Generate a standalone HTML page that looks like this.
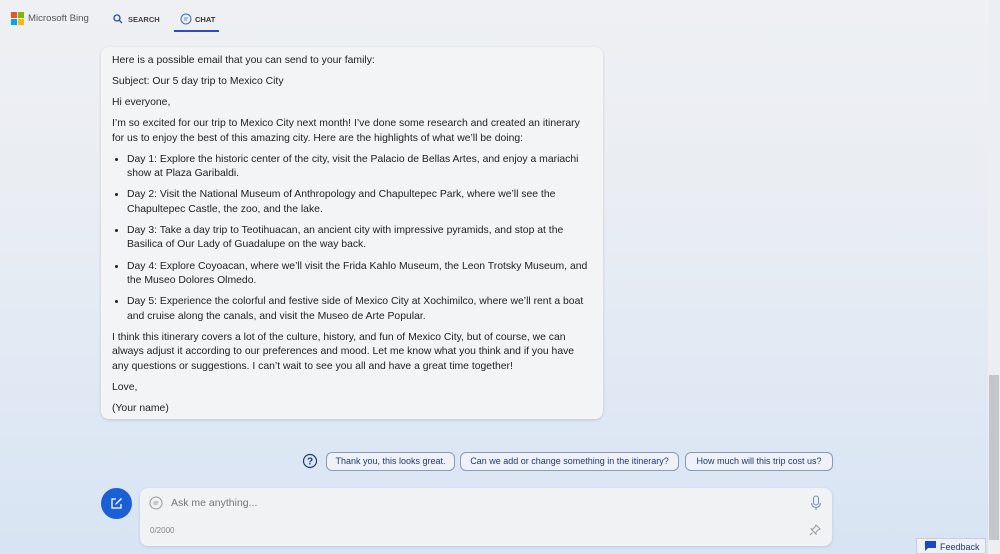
<!DOCTYPE html><html><head><style>
body{margin:0;width:1000px;height:554px;overflow:hidden;font-family:"Liberation Sans",sans-serif;background:linear-gradient(180deg,#eef0f3 0%,#e9edf3 40%,#dde7f4 80%,#d8e4f3 100%);position:relative}
.top{position:absolute;top:0;left:0;height:40px;width:988px}
.logo{position:absolute;left:11px;top:12px;width:13px;height:13px}
.logo i{position:absolute;width:6px;height:6px}
.msg{position:absolute;left:101px;top:47px;width:502px;height:372px;background:#f3f4f6;border-radius:8px;box-shadow:0 1px 3px rgba(0,0,0,.15);font-size:10.4px;color:#222;line-height:14.4px;box-sizing:border-box;padding:6.5px 11px}
.msg p{margin:0 0 6.8px}
.msg ul{margin:0 0 6.8px;padding-left:15px}
.msg li{margin-bottom:6.8px}
.chip{position:absolute;top:452px;border:1px solid #8a9bb8;border-radius:6px;background:#eef2f8;color:#1f3a7a;font-size:9px;line-height:17px;text-align:center;box-sizing:border-box;height:19px}
.input{position:absolute;left:140px;top:488px;width:692px;height:58px;background:#f1f2f4;border-radius:8px;box-shadow:0 1px 3px rgba(0,0,0,.12)}
</style></head><body>
<div class="top">
<div class="logo"><i style="left:0;top:0;background:#f25022"></i><i style="left:7px;top:0;background:#7fba00"></i><i style="left:0;top:7px;background:#00a4ef"></i><i style="left:7px;top:7px;background:#ffb900"></i></div>
<div style="position:absolute;left:28px;top:13px;font-size:9.6px;color:#555">Microsoft Bing</div>
<svg style="position:absolute;left:113px;top:14px" width="10" height="10" viewBox="0 0 10 10"><circle cx="4" cy="4" r="3" fill="none" stroke="#2150b8" stroke-width="1.3"/><path d="M6.2 6.2L9 9" stroke="#2150b8" stroke-width="1.3"/></svg>
<div style="position:absolute;left:128px;top:15px;font-size:7.5px;color:#444;font-weight:bold">SEARCH</div>
<svg style="position:absolute;left:180px;top:13px" width="12" height="12" viewBox="0 0 12 12"><circle cx="6" cy="6" r="5" fill="none" stroke="#3a6fd0" stroke-width="1"/><path d="M4 5h4M4 7h3" stroke="#3a6fd0" stroke-width=".8"/></svg>
<div style="position:absolute;left:195px;top:15px;font-size:7.5px;color:#333;font-weight:bold">CHAT</div>
<div style="position:absolute;left:174px;top:30px;width:45px;height:2px;background:#2a4fbf"></div>
</div>
<div class="msg">
<p>Here is a possible email that you can send to your family:</p>
<p>Subject: Our 5 day trip to Mexico City</p>
<p>Hi everyone,</p>
<p>I’m so excited for our trip to Mexico City next month! I’ve done some research and created an itinerary for us to enjoy the best of this amazing city. Here are the highlights of what we’ll be doing:</p>
<ul>
<li>Day 1: Explore the historic center of the city, visit the Palacio de Bellas Artes, and enjoy a mariachi show at Plaza Garibaldi.</li>
<li>Day 2: Visit the National Museum of Anthropology and Chapultepec Park, where we’ll see the Chapultepec Castle, the zoo, and the lake.</li>
<li>Day 3: Take a day trip to Teotihuacan, an ancient city with impressive pyramids, and stop at the Basilica of Our Lady of Guadalupe on the way back.</li>
<li>Day 4: Explore Coyoacan, where we’ll visit the Frida Kahlo Museum, the Leon Trotsky Museum, and the Museo Dolores Olmedo.</li>
<li>Day 5: Experience the colorful and festive side of Mexico City at Xochimilco, where we’ll rent a boat and cruise along the canals, and visit the Museo de Arte Popular.</li>
</ul>
<p>I think this itinerary covers a lot of the culture, history, and fun of Mexico City, but of course, we can always adjust it according to our preferences and mood. Let me know what you think and if you have any questions or suggestions. I can’t wait to see you all and have a great time together!</p>
<p>Love,</p>
<p>(Your name)</p>
</div>
<svg style="position:absolute;left:302px;top:453px" width="16" height="16" viewBox="0 0 16 16"><circle cx="8" cy="8" r="6.5" fill="none" stroke="#1f3a7a" stroke-width="1.2"/><text x="8" y="11.5" font-size="10" text-anchor="middle" fill="#1f3a7a" font-family="Liberation Sans" font-weight="bold">?</text></svg>
<div class="chip" style="left:326px;width:129px">Thank you, this looks great.</div>
<div class="chip" style="left:460px;width:219px">Can we add or change something in the itinerary?</div>
<div class="chip" style="left:685px;width:148px">How much will this trip cost us?</div>
<div style="position:absolute;left:101px;top:488px;width:31px;height:31px;border-radius:50%;background:#1b5fd6"></div>
<svg style="position:absolute;left:110px;top:497px" width="13" height="13" viewBox="0 0 13 13"><path d="M6 2H2v9h9V7" fill="none" stroke="#fff" stroke-width="1.3"/><path d="M5 8l1-2 5-5 1 1-5 5z" fill="#fff"/></svg>
<div class="input">
<svg style="position:absolute;left:9px;top:8px" width="14" height="14" viewBox="0 0 14 14"><circle cx="7" cy="7" r="6" fill="none" stroke="#999" stroke-width="1"/><path d="M4.5 6h5M4.5 8h4" stroke="#999" stroke-width=".9"/></svg>
<div style="position:absolute;left:31px;top:9px;font-size:10.5px;color:#777">Ask me anything...</div>
<div style="position:absolute;left:10px;top:38px;font-size:8px;color:#888">0/2000</div>
<svg style="position:absolute;left:670px;top:7px" width="12" height="16" viewBox="0 0 12 16"><rect x="3.5" y="1" width="5" height="9" rx="2.5" fill="none" stroke="#7b8fb8" stroke-width="1.1"/><path d="M1.5 8a4.5 4.5 0 0 0 9 0M6 12.5v2.5" fill="none" stroke="#7b8fb8" stroke-width="1.1"/></svg>
<svg style="position:absolute;left:669px;top:36px" width="12" height="12" viewBox="0 0 12 12"><path d="M7 1l4 4-2 1-2 2 0 2-5-5 2 0 2-2zM3.5 8.5L1 11" fill="none" stroke="#999" stroke-width="1"/></svg>
</div>
<div style="position:absolute;left:988px;top:0;width:12px;height:554px;background:#eceef1"></div>
<div style="position:absolute;left:989px;top:375px;width:10px;height:165px;background:#c4c6c9"></div>
<div style="position:absolute;left:916px;top:538px;width:70px;height:16px;background:#eef1f6;border:1px solid #ccd;box-sizing:border-box"></div>
<svg style="position:absolute;left:925px;top:541px" width="11" height="10" viewBox="0 0 11 10"><path d="M0 0h11v7H3l-3 3z" fill="#1b47c4"/></svg>
<div style="position:absolute;left:940px;top:542px;font-size:9px;color:#1f3a7a">Feedback</div>
</body></html>
